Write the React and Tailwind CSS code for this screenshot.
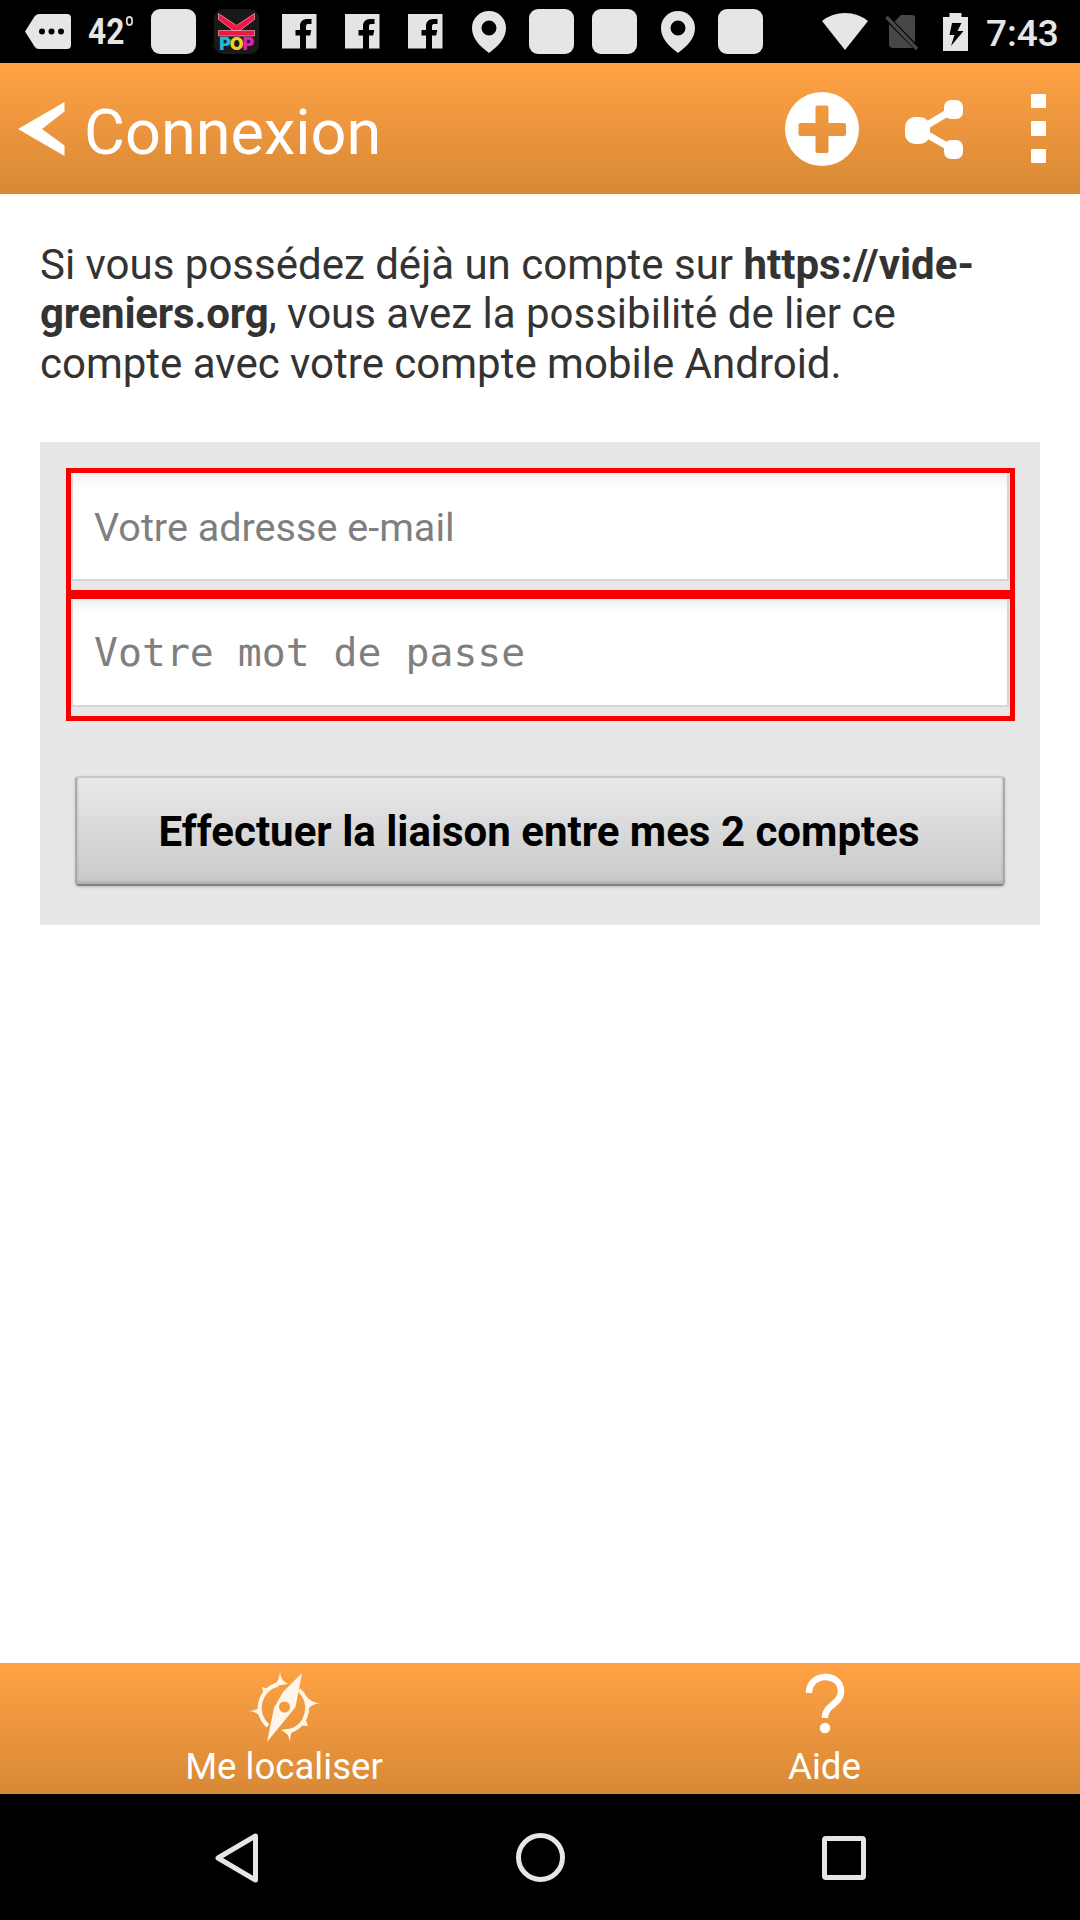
const Cell = ({ children }) => (
  <div className="flex h-full w-[63px] shrink-0 items-center justify-center">{children}</div>
);

const Blank = () => (
  <Cell>
    <div className="h-[45px] w-[45px] rounded-[9px] bg-[#e6e6e6]" />
  </Cell>
);

const Facebook = () => (
  <Cell>
    <svg width="35" height="35" viewBox="0 0 35 35">
      <path fill="#e4e4e4" d="M0 0H34.5V34.5H24V21.500H28.200L29.300 16H24V12.500C24 10.500 25 10 26.500 10H29.500V5H25C20.500 5 18 8 18 12V16H13.500V21.500H18V34.500H0Z" />
    </svg>
  </Cell>
);

const Pin = () => (
  <Cell>
    <svg width="34" height="42" viewBox="0 0 34 42">
      <path fill="#e4e4e4" fillRule="evenodd" d="M17 0C7.500 0 0 7.500 0 17c0 10 7.500 18 17 25 9.500-7 17-15 17-25C34 7.500 26.500 0 17 0Zm0 9.500a7.500 7.500 0 1 1 0 15 7.500 7.500 0 0 1 0-15Z" />
    </svg>
  </Cell>
);

const KPop = () => (
  <Cell>
    <div className="flex h-[45px] w-[45px] flex-col items-center rounded-[9px] bg-[#191919]">
      <svg className="mt-[4px] shrink-0" width="37" height="24" viewBox="0 0 37 24">
        <path fill="#ee1745" stroke="#f6a9b8" strokeWidth=".7" d="M.5 17.500h36v5.500H.5zM.5.500 18.500 12.500 36.500.500V6.500L22 17.500H15L.5 6.500z" />
      </svg>
      <div className="flex scale-x-105 font-['Inter'] text-[17px] leading-[14px] font-black">
        <span className="text-[#22b8d4]">P</span>
        <span className="-ml-[1px] text-[#f1cf1f]">O</span>
        <span className="-ml-[1px] text-[#dd1fc0]">P</span>
      </div>
    </div>
  </Cell>
);

function StatusBar() {
  return (
    <div className="flex h-[63px] shrink-0 items-center bg-black pl-[16px] text-[#e6e6e6]">
      <Cell>
        <svg width="46" height="35" viewBox="0 0 46 35">
          <path fill="#e6e6e6" d="M0 17.500 9.500 2.500Q11 0 14 0H42Q46 0 46 4V31Q46 35 42 35H14Q11 35 9.500 32.500Z" />
          <circle cx="17" cy="17.500" r="3" />
          <circle cx="26.500" cy="17.500" r="3" />
          <circle cx="36" cy="17.500" r="3" />
        </svg>
      </Cell>
      <Cell>
        <div className="flex origin-center scale-x-[.88] items-start leading-none font-bold">
          <span className="text-[36px]">42</span>
          <span className="mt-[2px] ml-[2px] h-[10px] w-[8px] rounded-full border-2 border-[#d8d8d8]" />
        </div>
      </Cell>
      <Blank />
      <KPop />
      <Facebook />
      <Facebook />
      <Facebook />
      <Pin />
      <Blank />
      <Blank />
      <Pin />
      <Blank />
      <svg className="ml-[50px] shrink-0" width="46" height="37" viewBox="0 0 46 37">
        <path fill="#e6e6e6" d="M0 8Q10 0 23 0T46 8L23 37Z" />
      </svg>
      <svg className="mt-[2px] ml-[17px] shrink-0" width="34" height="37" viewBox="0 0 34 37">
        <path fill="#474747" d="M16 1H27Q30 1 30 4V28.500L9.500 7.500ZM4 10 28 34H8Q4 34 4 30Z" />
        <path stroke="#474747" strokeWidth="3.500" d="M1.500 3 32 35" />
      </svg>
      <svg className="ml-[24px] shrink-0" width="25" height="38" viewBox="0 0 25 38">
        <path fill="#e6e6e6" fillRule="evenodd" d="M6.500 0H18.500V4H25V38H0V4H6.500ZM9 10 6.500 22H11.500L8 33 20.500 18H14.500L18.500 10Z" />
      </svg>
      <span className="mt-[3px] ml-[18px] text-[37px] leading-none font-medium whitespace-nowrap">7:43</span>
    </div>
  );
}

function Header() {
  return (
    <header className="flex h-[131px] shrink-0 items-center bg-linear-to-b from-[#ffa245] to-[#d88936] text-white">
      <svg className="mt-[1px] ml-[18px] shrink-0" width="48" height="56" viewBox="0 0 48 56">
        <path fill="#fff" d="M0 28 46.500 1V10.500L24 28 46.500 44.500V55Z" />
      </svg>
      <h1 className="mt-[7px] ml-[18px] flex-1 text-[63px] leading-none font-normal">Connexion</h1>
      <svg className="shrink-0" width="74" height="74" viewBox="0 0 74 74">
        <path fill="#fff" fillRule="evenodd" d="M37 0a37 37 0 1 0 0 74a37 37 0 1 0 0-74ZM32.500 13.500H41.500Q43.500 13.500 43.500 15.500V31H59Q61 31 61 33V42Q61 44 59 44H43.500V59Q43.500 61 41.500 61H32.500Q30.500 61 30.500 59V44H15.500Q13.500 44 13.500 42V33Q13.500 31 15.500 31H30.500V15.500Q30.500 13.500 32.500 13.500Z" />
      </svg>
      <svg className="mt-[2px] ml-[46px] shrink-0" width="59" height="60" viewBox="0 0 59 60">
        <g fill="#fff">
          <rect x="0" y="17" width="25" height="27" rx="10" />
          <rect x="39" y="0" width="19" height="19" rx="7" />
          <rect x="39" y="40" width="19" height="19" rx="7" />
        </g>
        <path d="M49 9 14 30 49 50" fill="none" stroke="#fff" strokeWidth="7" />
      </svg>
      <div className="mr-[34px] ml-[67px] flex flex-col gap-[13px]">
        <i className="block h-[14.500px] w-[15px] rounded-[1px] bg-white" />
        <i className="block h-[14.500px] w-[15px] rounded-[1px] bg-white" />
        <i className="block h-[14.500px] w-[15px] rounded-[1px] bg-white" />
      </div>
    </header>
  );
}

const inputLook =
  "block h-[108px] w-[938px] border-x-2 border-b-2 border-[#d6d6da] bg-white px-[21px] text-[#7f7f7f] placeholder-[#7f7f7f] placeholder:opacity-100 shadow-[inset_0_12px_14px_-6px_#eeeeee] outline-none";

function LoginForm() {
  return (
    <form className="mx-[40px] mt-[54px] h-[482.500px] bg-[#e7e7e7] px-[26px] pt-[25.500px]">
      <div className="h-[126px] w-[949px] border-5 border-b-4 border-[#f60000]">
        <input className={inputLook + " pt-[4px] text-[39.600px]"} type="text" placeholder="Votre adresse e-mail" />
      </div>
      <div className="h-[127px] w-[949px] border-5 border-[#f60000]">
        <input
          className={inputLook + " pt-[1px] font-['DejaVu_Sans_Mono',monospace] text-[39.800px]"}
          type="text"
          placeholder="Votre mot de passe"
        />
      </div>
      <button
        type="button"
        className="mt-[55px] ml-[9px] block h-[110px] w-[930px] rounded-[4px] border-2 border-x-[#aaaaaa] border-t-[#c8c8c8] border-b-[#828282] bg-linear-to-b from-[#e9e9e9] to-[#c9c9c9] pt-[2px] pr-[2px] text-[42px] font-bold whitespace-nowrap text-black shadow-[0_1px_3px_#bdbdbd,inset_0_-2px_3px_#aaaaaa]"
      >
        Effectuer la liaison entre mes 2 comptes
      </button>
    </form>
  );
}

function Compass() {
  return (
    <svg width="74" height="74" viewBox="0 0 74 74">
      <g fill="none" stroke="#fff5ea" strokeWidth="4">
        <path d="M43 60A24 24 0 0 0 52 19" />
        <path d="M31 13.500A24 24 0 0 0 21 55" />
      </g>
      <g fill="#fff5ea">
        <path fillRule="evenodd" d="M55 2 48.500 36 38 49 20 71 27 37 36 21ZM37.500 30.500a5.500 5.500 0 1 0 0 11a5.500 5.500 0 1 0 0-11Z" />
        <path d="M33 1Q32 10 27 15L41 13Q34 10 33 1ZM1 40Q9 40 14 46V35Q9 40 1 40ZM73 32Q65 32 60 26L61 38Q65 33 73 32ZM43 71Q42 62 34 59L47 57Q43 62 43 71Z" />
        <path d="M15 16 22 18 17 24ZM61 55 52 54 58 47Z" />
      </g>
    </svg>
  );
}

function Footer() {
  return (
    <footer className="grid h-[131px] shrink-0 grid-cols-2 bg-linear-to-b from-[#ffa245] to-[#d88936] pl-[29px] text-[36.600px] leading-[42px] text-white">
      <div className="flex w-[510px] flex-col items-center">
        <div className="flex h-[83px] items-center pt-[6px]">
          <Compass />
        </div>
        <span>Me localiser</span>
      </div>
      <div className="flex w-[540px] flex-col items-center">
        <div className="flex h-[83px] items-start pt-[10px]">
          <svg width="42" height="62" viewBox="0 0 42 62">
            <path d="M5 20C5 -1 37 -1 37 18C37 32 21 31 21 45" fill="none" stroke="#fff" strokeWidth="6.500" />
            <circle cx="21" cy="55" r="5.200" fill="#fff" />
          </svg>
        </div>
        <span>Aide</span>
      </div>
    </footer>
  );
}

function NavBar() {
  return (
    <nav className="flex h-[126px] shrink-0 items-center bg-black pt-[1px]">
      <svg className="ml-[215px]" width="44" height="50" viewBox="0 0 44 50">
        <path d="M3 25 40.500 3V47Z" fill="none" stroke="#e6e6e6" strokeWidth="5" strokeLinejoin="round" />
      </svg>
      <div className="ml-[257px] h-[49px] w-[49px] rounded-full border-[5.500px] border-[#e6e6e6]" />
      <div className="ml-[257px] h-[44px] w-[44px] rounded-[4px] border-5 border-[#e6e6e6]" />
    </nav>
  );
}

export default function App() {
  return (
    <div className="flex h-[1920px] w-[1080px] flex-col overflow-hidden bg-white font-['Roboto',sans-serif]">
      <StatusBar />
      <Header />
      <main className="flex-1 border-t-4 border-[#fffdf6]">
        <p className="mx-[40px] mt-[42px] text-[42px] leading-[49.400px] text-[#333333]">
          Si vous possédez déjà un compte sur <b>https://vide-</b>
          <br />
          <b className="tracking-[-0.2px]">greniers.org</b>, vous avez la possibilité de lier ce
          <br />
          compte avec votre compte mobile Android.
        </p>
        <LoginForm />
      </main>
      <Footer />
      <NavBar />
    </div>
  );
}
